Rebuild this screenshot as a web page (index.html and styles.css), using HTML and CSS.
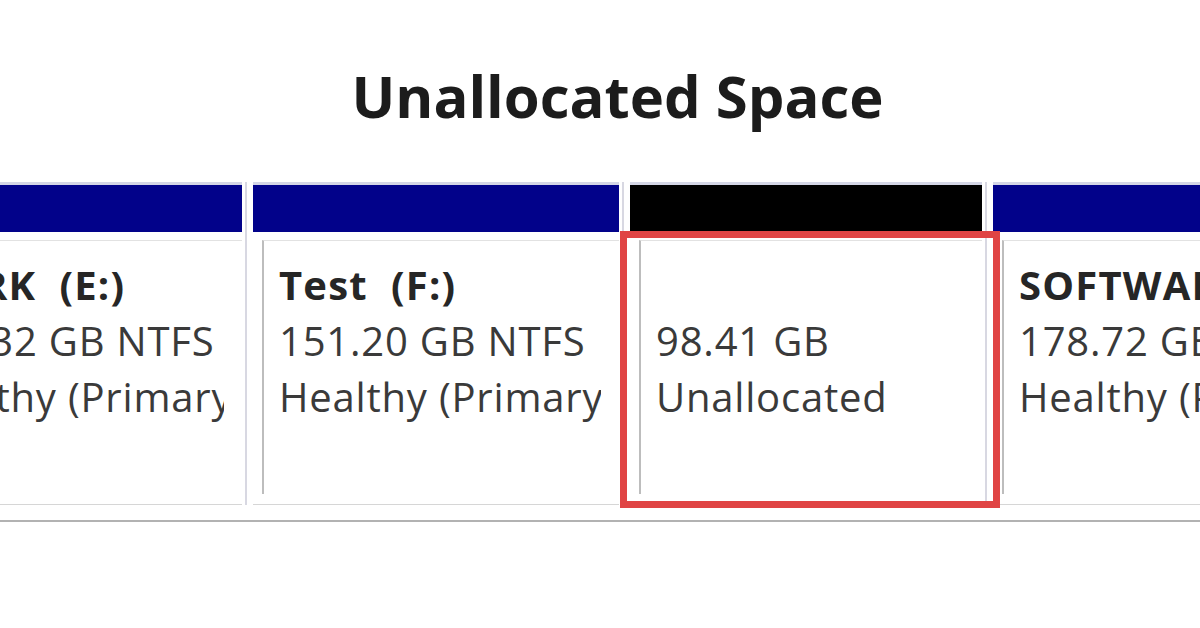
FILE: index.html
```html
<!DOCTYPE html>
<html lang="en">
<head>
<meta charset="utf-8">
<title>Unallocated Space</title>
<link rel="stylesheet" href="styles.css">
</head>
<body>
<h1 class="title">Unallocated Space</h1>
<div class="disk">
  <div class="part p1">
    <div class="bar blue"></div>
    <div class="body">
      <div class="inner">
        <div class="txt">
          <div class="name">WORK&nbsp;&nbsp;(E:)</div>
          <div class="line">178.32 GB NTFS</div>
          <div class="line">Healthy (Primary Partition)</div>
        </div>
      </div>
    </div>
  </div>
  <div class="part p2">
    <div class="bar blue"></div>
    <div class="body">
      <div class="inner">
        <div class="txt">
          <div class="name">Test&nbsp;&nbsp;(F:)</div>
          <div class="line">151.20 GB NTFS</div>
          <div class="line">Healthy (Primary Partition)</div>
        </div>
      </div>
    </div>
  </div>
  <div class="part p3">
    <div class="bar black"></div>
    <div class="body">
      <div class="inner">
        <div class="txt">
          <div class="name">&nbsp;</div>
          <div class="line">98.41 GB</div>
          <div class="line">Unallocated</div>
        </div>
      </div>
    </div>
  </div>
  <div class="part p4">
    <div class="bar blue"></div>
    <div class="body">
      <div class="inner">
        <div class="txt">
          <div class="name">SOFTWARE&nbsp;&nbsp;(G:)</div>
          <div class="line">178.72 GB NTFS</div>
          <div class="line">Healthy (Primary Partition)</div>
        </div>
      </div>
    </div>
  </div>
  <div class="highlight"></div>
</div>
</body>
</html>
```
FILE: styles.css
```css
html, body {
  margin: 0;
  padding: 0;
  background: #ffffff;
  overflow: hidden;
}

body {
  width: 1200px;
  height: 628px;
  font-family: "Open Sans", "Noto Sans", sans-serif;
}

.title {
  margin: 61px 0 0 0;
  padding-left: 35px;
  text-align: center;
  font-size: 58px;
  line-height: 70px;
  font-weight: 700;
  color: #1c1c1c;
  letter-spacing: 0;
}

.disk {
  position: relative;
  display: flex;
  gap: 6px;
  margin-top: 51px;
  margin-left: -118px;
  width: 1450px;
  padding-bottom: 15px;
  border-bottom: 2px solid #b2b2b2;
}

.part {
  display: flex;
  flex-direction: column;
  padding-right: 3px;
  border-right: 2px solid #d8d8e2;
  flex: none;
}

.p1 { width: 360px; }
.p2 { width: 366px; }
.p3 { width: 352px; }
.p4 { width: 400px; }

.bar {
  height: 47px;
  border-top: 3px solid #d4d6e6;
}

.blue { background: #02028a; }
.black { background: #000000; }

.body {
  height: 273px;
  padding: 8px 0 10px 9px;
  box-sizing: border-box;
  border-bottom: 1px solid #d6d6d6;
}

.inner {
  height: 100%;
  border-left: 2px solid #bdbdbd;
  border-top: 1px solid #e2e2e2;
  padding: 16px 0 0 15px;
  box-sizing: border-box;
}

.txt {
  overflow: hidden;
  white-space: nowrap;
  margin-right: 18px;
  font-size: 40px;
  line-height: 56px;
  letter-spacing: 0.8px;
  color: #3a3a3a;
}

.p4 .txt { margin-right: 0; }

.name {
  font-weight: 700;
  color: #262626;
  letter-spacing: 1.2px;
}

.highlight {
  position: absolute;
  left: 738px;
  top: 49px;
  width: 380px;
  height: 277px;
  box-sizing: border-box;
  border: 7px solid #e04444;
}
```
